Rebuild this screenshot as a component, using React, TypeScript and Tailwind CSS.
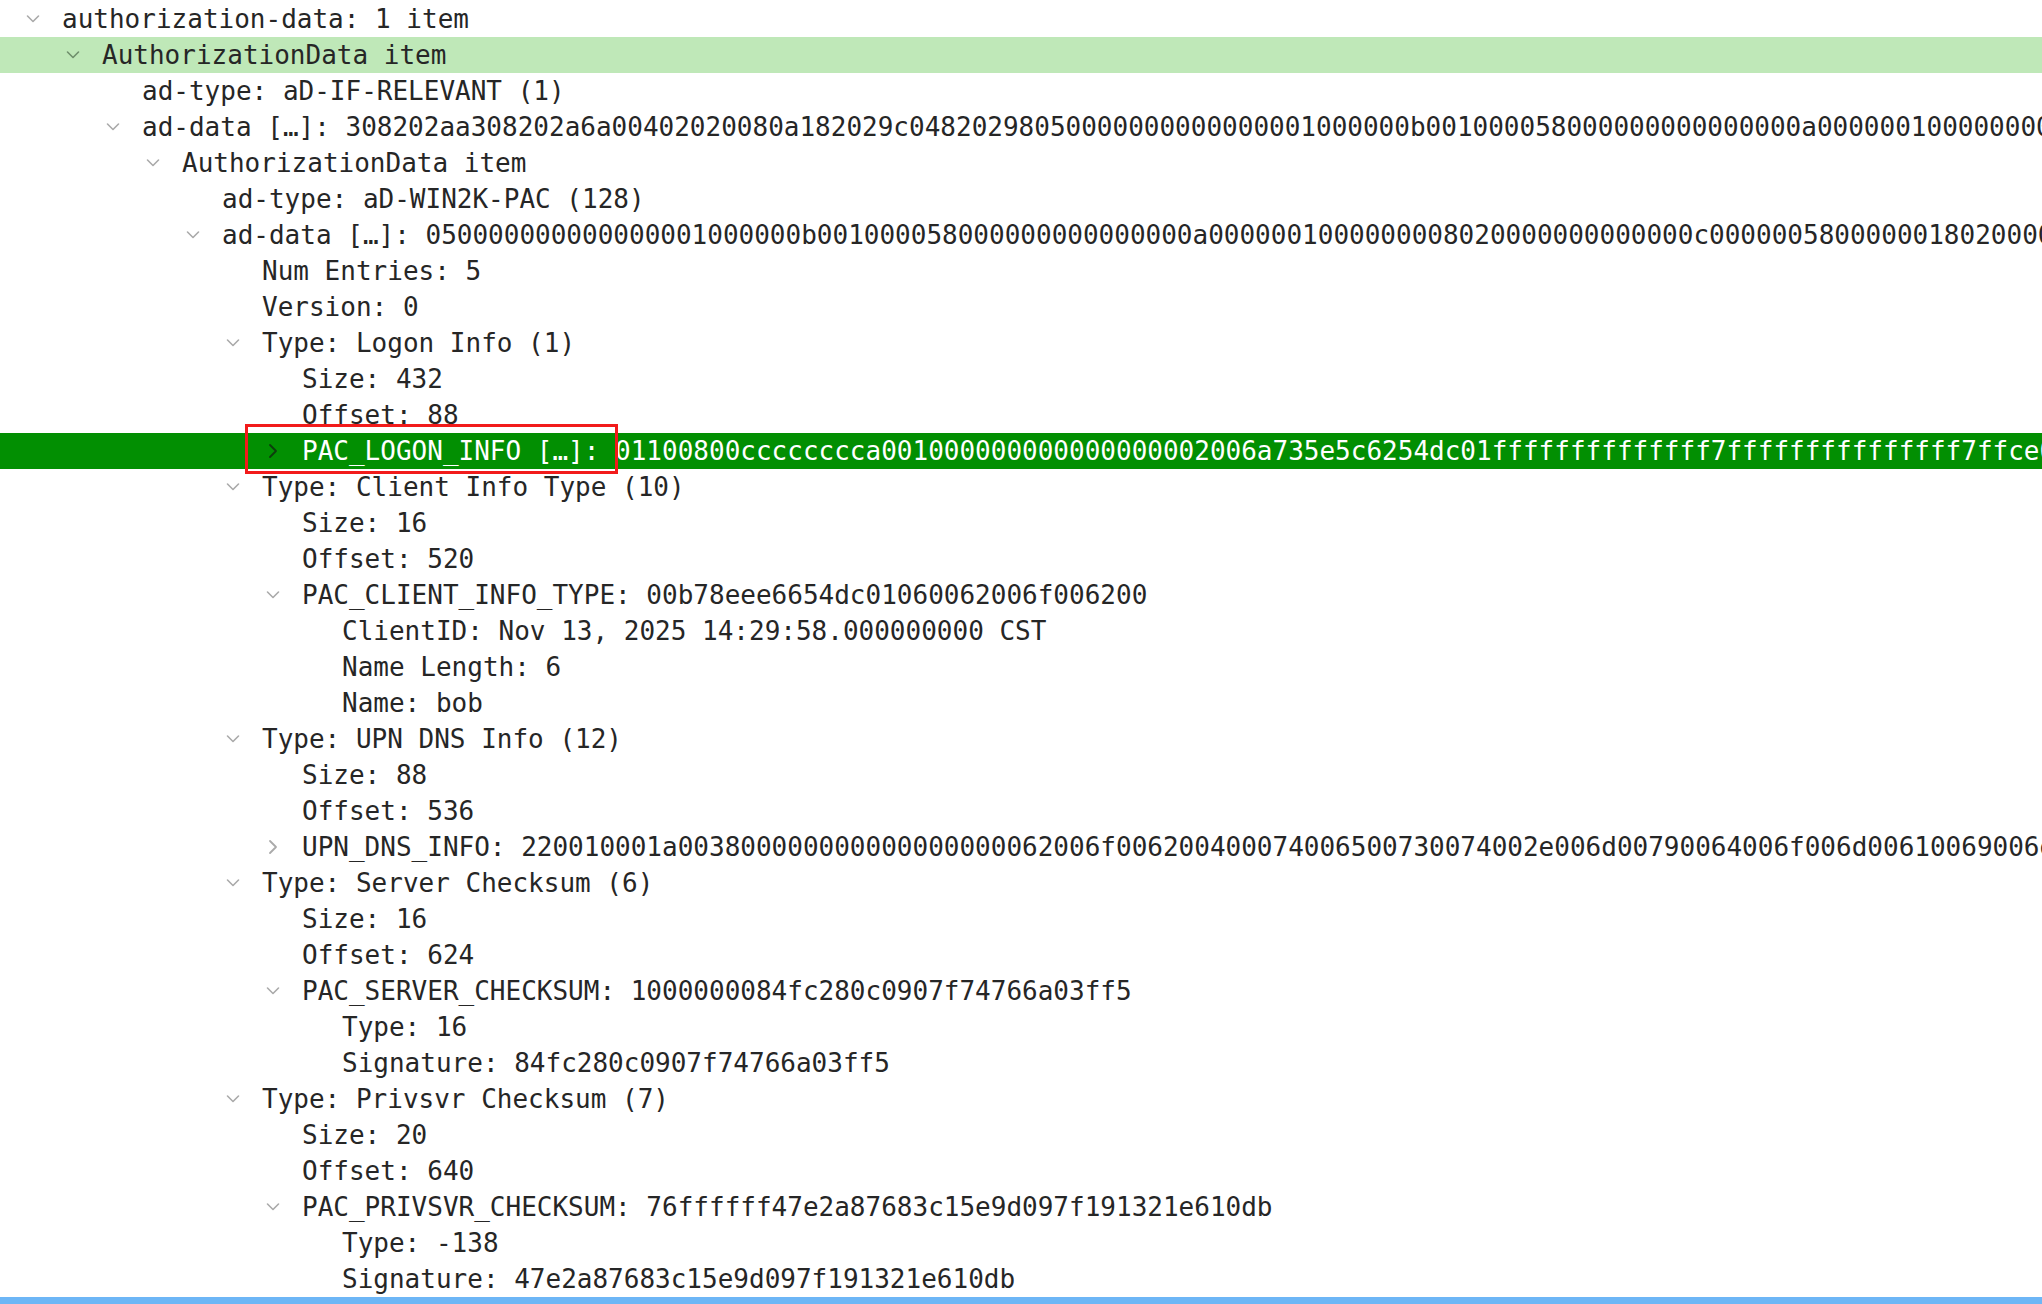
import React from "react";

type Kind = "down" | "right" | "none";
type Row = { level: number; kind: Kind; text: string; hl?: "light" | "dark"; box?: boolean };

const pacHeader =
  "0500000000000000" +
  "01000000b00100005800000000000000" +
  "0a000000100000000802000000000000" +
  "0c000000580000001802000000000000" +
  "06000000100000007002000000000000" +
  "07000000140000008002000000000000";

const logonInfo =
  "01100800cccccccca00100000000000000000200" +
  "6a735e5c6254dc01" +
  "ffffffffffffff7f" +
  "ffffffffffffff7f" +
  "fce0a8c45c54dc01" +
  "fca0125b2755dc01" +
  "ffffffffffffff7f";

const upnDns =
  "220010001a003800" +
  "0000000000000000" +
  "62006f00620040007400650073007400" +
  "2e006d00790064006f006d00610069006e00" +
  "000054004500530054002e004d00590044004f004d00410049004e00";

const rows: Row[] = [
  { level: 0, kind: "down", text: "authorization-data: 1 item" },
  { level: 1, kind: "down", text: "AuthorizationData item", hl: "light" },
  { level: 2, kind: "none", text: "ad-type: aD-IF-RELEVANT (1)" },
  { level: 2, kind: "down", text: "ad-data […]: 308202aa308202a6a00402020080a182029c04820298" + pacHeader + logonInfo },
  { level: 3, kind: "down", text: "AuthorizationData item" },
  { level: 4, kind: "none", text: "ad-type: aD-WIN2K-PAC (128)" },
  { level: 4, kind: "down", text: "ad-data […]: " + pacHeader + logonInfo },
  { level: 5, kind: "none", text: "Num Entries: 5" },
  { level: 5, kind: "none", text: "Version: 0" },
  { level: 5, kind: "down", text: "Type: Logon Info (1)" },
  { level: 6, kind: "none", text: "Size: 432" },
  { level: 6, kind: "none", text: "Offset: 88" },
  { level: 6, kind: "right", text: "PAC_LOGON_INFO […]: " + logonInfo, hl: "dark", box: true },
  { level: 5, kind: "down", text: "Type: Client Info Type (10)" },
  { level: 6, kind: "none", text: "Size: 16" },
  { level: 6, kind: "none", text: "Offset: 520" },
  { level: 6, kind: "down", text: "PAC_CLIENT_INFO_TYPE: 00b78eee6654dc01060062006f006200" },
  { level: 7, kind: "none", text: "ClientID: Nov 13, 2025 14:29:58.000000000 CST" },
  { level: 7, kind: "none", text: "Name Length: 6" },
  { level: 7, kind: "none", text: "Name: bob" },
  { level: 5, kind: "down", text: "Type: UPN DNS Info (12)" },
  { level: 6, kind: "none", text: "Size: 88" },
  { level: 6, kind: "none", text: "Offset: 536" },
  { level: 6, kind: "right", text: "UPN_DNS_INFO: " + upnDns },
  { level: 5, kind: "down", text: "Type: Server Checksum (6)" },
  { level: 6, kind: "none", text: "Size: 16" },
  { level: 6, kind: "none", text: "Offset: 624" },
  { level: 6, kind: "down", text: "PAC_SERVER_CHECKSUM: 1000000084fc280c0907f74766a03ff5" },
  { level: 7, kind: "none", text: "Type: 16" },
  { level: 7, kind: "none", text: "Signature: 84fc280c0907f74766a03ff5" },
  { level: 5, kind: "down", text: "Type: Privsvr Checksum (7)" },
  { level: 6, kind: "none", text: "Size: 20" },
  { level: 6, kind: "none", text: "Offset: 640" },
  { level: 6, kind: "down", text: "PAC_PRIVSVR_CHECKSUM: 76ffffff47e2a87683c15e9d097f191321e610db" },
  { level: 7, kind: "none", text: "Type: -138" },
  { level: 7, kind: "none", text: "Signature: 47e2a87683c15e9d097f191321e610db" },
];

const indent = [
  "pl-0",
  "pl-[40px]",
  "pl-[80px]",
  "pl-[120px]",
  "pl-[160px]",
  "pl-[200px]",
  "pl-[240px]",
  "pl-[280px]",
];

function Chevron({ kind, color }: { kind: Kind; color: string }) {
  if (kind === "none") return null;
  if (kind === "down") {
    return (
      <svg width="14" height="10" viewBox="0 0 14 10" className="block">
        <polyline points="1.5,2 7,7.5 12.5,2" fill="none" stroke={color} strokeWidth="1.6" strokeLinecap="round" strokeLinejoin="round" />
      </svg>
    );
  }
  return (
    <svg width="14" height="16" viewBox="0 0 14 16" className="block">
      <polyline points="4,2 10,8 4,14" fill="none" stroke={color} strokeWidth="1.8" strokeLinecap="round" strokeLinejoin="round" />
    </svg>
  );
}

export default function App() {
  return (
    <div className="flex h-[1304px] w-full flex-col overflow-hidden bg-white font-['DejaVu_Sans_Mono',monospace] text-[26px] text-[#262626]">
      <div className="flex flex-col pt-[1px]">
        {rows.map((r, i) => {
          const bg =
            r.hl === "light" ? "bg-[#bfe8b8]" : r.hl === "dark" ? "bg-[#028f02] text-white" : "";
          const chevColor = r.hl === "dark" ? "#0d3d0d" : r.hl === "light" ? "#6f8f6c" : "#aaaaaa";
          return (
            <div key={i} className={`relative flex h-[36px] shrink-0 items-center ${indent[r.level]} ${bg}`}>
              <span className="flex w-[62px] shrink-0 items-center pl-[26px]">
                <Chevron kind={r.kind} color={chevColor} />
              </span>
              <span className="whitespace-nowrap leading-[36px]">{r.text}</span>
              {r.box && (
                <div className="pointer-events-none absolute left-[245px] top-[-9px] h-[50px] w-[373px] border-[3px] border-[#f21b1b]" />
              )}
            </div>
          );
        })}
      </div>
      <div className="flex-1 bg-[#6db6f6]" />
    </div>
  );
}
